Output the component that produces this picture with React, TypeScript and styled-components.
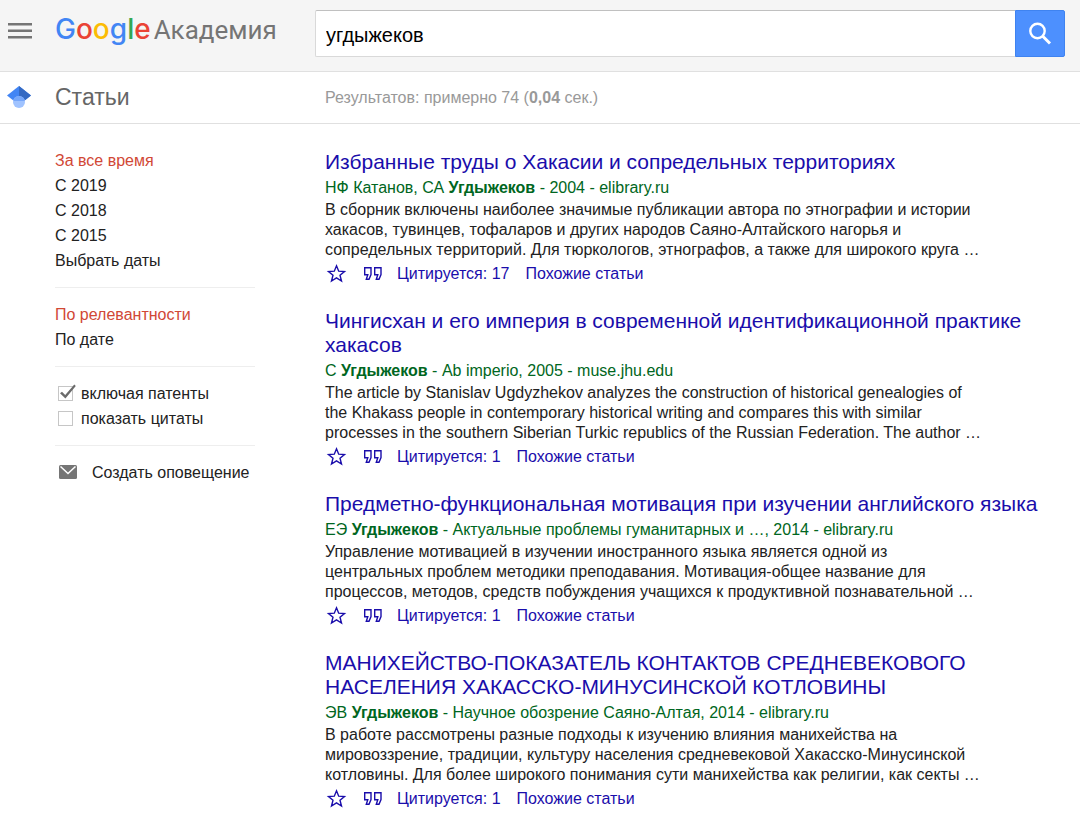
import React from 'react';
import styled, { createGlobalStyle } from 'styled-components';

const GlobalStyle = createGlobalStyle`
  *, *::before, *::after { box-sizing: border-box; }
  body {
    margin: 0;
    background: #fff;
    color: #222;
    font: 16px/20px "Liberation Sans", Arial, sans-serif;
  }
  a { color: inherit; text-decoration: none; }
  button { border: 0; padding: 0; background: none; font: inherit; color: inherit; cursor: pointer; }
  svg { flex-shrink: 0; }
`;

const Header = styled.header`
  display: flex;
  align-items: flex-start;
  height: 72px;
  padding: 10px 15px 0 0;
  background: #f5f5f5;
  border-bottom: 1px solid #e0e0e0;
`;

const Gutter = styled.div`
  flex: 0 0 55px;
  padding: 0 0 2px 7px;
  display: flex;
  align-items: center;
`;

const MenuButton = styled.button`
  flex: 0 0 55px;
  height: 42px;
  padding-left: 8px;
  display: flex;
  align-items: center;
`;

const Brand = styled.a`
  flex: 0 0 260px;
  display: flex;
  align-items: baseline;
  gap: 3px;
  line-height: 38px;
  white-space: nowrap;
`;

const Wordmark = styled.span`
  font-family: Inter, sans-serif;
  font-size: 28px;
  font-weight: 500;
`;

const Letter = styled.span<{ $color: string }>`
  color: ${(p) => p.$color};
`;

const Product = styled.span`
  font-family: Roboto, sans-serif;
  font-size: 26px;
  color: #757575;
`;

const SearchForm = styled.form`
  flex: 1;
  min-width: 0;
  display: flex;
  height: 47px;
`;

const SearchInput = styled.input`
  flex: 1;
  min-width: 0;
  padding: 4px 10px 0;
  border: 1px solid #d9d9d9;
  border-top-color: #c0c0c0;
  border-right: 0;
  border-radius: 2px 0 0 2px;
  background: #fff;
  color: #000;
  font: 20px "Liberation Sans", Arial, sans-serif;
  outline: none;
`;

const SearchButton = styled.button`
  flex: 0 0 50px;
  display: flex;
  align-items: center;
  justify-content: center;
  background: #4d90fe;
  border: 1px solid #3f83f0;
  border-radius: 0 2px 2px 0;
`;

const SubHeader = styled.div`
  display: flex;
  align-items: center;
  height: 52px;
  border-bottom: 1px solid #e0e0e0;
`;

const SectionTitle = styled.h1`
  flex: 0 0 270px;
  margin: 0;
  padding-bottom: 2px;
  font-size: 23px;
  font-weight: 400;
  line-height: 28px;
  color: #666;
`;

const Stats = styled.div`
  color: #999;
`;

const Content = styled.div`
  display: flex;
  align-items: flex-start;
  padding: 24px 20px 16px 55px;
`;

const Sidebar = styled.nav`
  flex: 0 0 200px;
  margin-right: 70px;
`;

const Group = styled.ul`
  list-style: none;
  margin: 0;
  padding: 0 0 14px;

  & + & {
    padding-top: 14px;
    border-top: 1px solid #eee;
  }
`;

const FilterItem = styled.li<{ $active?: boolean }>`
  display: flex;
  align-items: center;
  height: 25px;
  white-space: nowrap;
  color: ${(p) => (p.$active ? '#d14836' : '#222')};
`;

const CheckLabel = styled.label`
  display: flex;
  align-items: center;
  gap: 7px;
  padding-left: 3px;
`;

const CheckWrap = styled.span`
  position: relative;
  display: flex;
  width: 16px;

  svg {
    position: absolute;
    left: 0;
    bottom: 0;
    pointer-events: none;
  }
`;

const CheckBox = styled.input`
  appearance: none;
  width: 15px;
  height: 15px;
  margin: 0;
  border: 1px solid #c6c6c6;
  background: #fff;
`;

const AlertLink = styled.a`
  display: flex;
  align-items: center;
  gap: 14px;
  padding-left: 3px;
`;

const Results = styled.main`
  flex: 1;
  min-width: 0;
  padding-top: 2px;
`;

const Result = styled.article`
  margin-bottom: 23px;
`;

const Title = styled.h3`
  margin: 0 0 3px;
  font-size: 21px;
  font-weight: 400;
  line-height: 24px;
  color: #1a0dab;
`;

const Meta = styled.div`
  margin-bottom: 1px;
  line-height: 22px;
  color: #006621;
`;

const Snippet = styled.p`
  margin: 0 0 2px;
  line-height: 20px;
`;

const Actions = styled.div`
  display: flex;
  align-items: center;
  gap: 16px;
  height: 24px;
  color: #1a0dab;
`;

const IconButton = styled.button`
  display: flex;
  width: 20px;
`;

const StarIcon = () => (
  <svg width="22" height="22" viewBox="0 0 22 22" fill="none" stroke="currentColor" strokeWidth="1.400">
    <path d="M11.500 2.800l2.200 5.400 5.800.4-4.500 3.700 1.500 5.700-5-3.100-5 3.100 1.500-5.700-4.500-3.700 5.800-.4z" />
  </svg>
);

const QuoteIcon = () => (
  <svg width="22" height="22" viewBox="0 0 22 22" fill="none" stroke="currentColor" strokeWidth="1.400">
    <path d="M3.700 4.700h6.300v6.800l-2 4.800H5.300l1.500-4.500H3.700zM13.700 4.700H20v6.800l-2 4.800h-2.700l1.500-4.500h-3.100z" />
  </svg>
);

const MenuIcon = () => (
  <svg width="24" height="16" viewBox="0 0 24 16" fill="#757575">
    <path d="M0 0h24v2.500H0zM0 6.500h24V9H0zM0 13h24v2.500H0z" />
  </svg>
);

const SearchIcon = () => (
  <svg width="24" height="24" viewBox="0 0 24 24" fill="none" stroke="#fff" strokeWidth="2.400">
    <circle cx="9.500" cy="9" r="7.200" />
    <path d="M14.500 14L22 21.500" strokeWidth="3" />
  </svg>
);

const CapIcon = () => (
  <svg width="24" height="24" viewBox="0 0 24 24">
    <path d="M12 1L0 10.500 7 16h10l7-5.500z" fill="#4285f4" />
    <path d="M12 1v10l5 5 7-5.500z" fill="#356ac3" />
    <circle cx="12" cy="17" r="6" fill="#a0c3ff" />
    <path d="M6.500 14.500a6 6 0 0 1 11 0L17 16H7z" fill="#76a7fa" />
  </svg>
);

const TickIcon = () => (
  <svg width="19" height="17" viewBox="0 0 19 17" fill="#6b6b6b">
    <path d="M2 9.200l2-1.500 3.200 3.300L16.300.6l1.500 1.300L7.400 14.600z" />
  </svg>
);

const MailIcon = () => (
  <svg width="20" height="18" viewBox="0 0 20 18">
    <rect x="1" y="1" width="18" height="14" rx="1.500" fill="#757575" />
    <path d="M2.500 2.500l7.500 7 7.500-7" fill="none" stroke="#fff" strokeWidth="1.500" />
  </svg>
);

type Item = { title: string; before: string; after: string; lines: string[]; cited: number };

const items: Item[] = [
  {
    title: 'Избранные труды о Хакасии и сопредельных территориях',
    before: 'НФ Катанов, СА ',
    after: ' - 2004 - elibrary.ru',
    lines: [
      'В сборник включены наиболее значимые публикации автора по этнографии и истории',
      'хакасов, тувинцев, тофаларов и других народов Саяно-Алтайского нагорья и',
      'сопредельных территорий. Для тюркологов, этнографов, а также для широкого круга …',
    ],
    cited: 17,
  },
  {
    title: 'Чингисхан и его империя в современной идентификационной практике хакасов',
    before: 'С ',
    after: ' - Ab imperio, 2005 - muse.jhu.edu',
    lines: [
      'The article by Stanislav Ugdyzhekov analyzes the construction of historical genealogies of',
      'the Khakass people in contemporary historical writing and compares this with similar',
      'processes in the southern Siberian Turkic republics of the Russian Federation. The author …',
    ],
    cited: 1,
  },
  {
    title: 'Предметно-функциональная мотивация при изучении английского языка',
    before: 'ЕЭ ',
    after: ' - Актуальные проблемы гуманитарных и …, 2014 - elibrary.ru',
    lines: [
      'Управление мотивацией в изучении иностранного языка является одной из',
      'центральных проблем методики преподавания. Мотивация-общее название для',
      'процессов, методов, средств побуждения учащихся к продуктивной познавательной …',
    ],
    cited: 1,
  },
  {
    title: 'МАНИХЕЙСТВО-ПОКАЗАТЕЛЬ КОНТАКТОВ СРЕДНЕВЕКОВОГО НАСЕЛЕНИЯ ХАКАССКО-МИНУСИНСКОЙ КОТЛОВИНЫ',
    before: 'ЭВ ',
    after: ' - Научное обозрение Саяно-Алтая, 2014 - elibrary.ru',
    lines: [
      'В работе рассмотрены разные подходы к изучению влияния манихейства на',
      'мировоззрение, традиции, культуру населения средневековой Хакасско-Минусинской',
      'котловины. Для более широкого понимания сути манихейства как религии, как секты …',
    ],
    cited: 1,
  },
];

const logo: [string, string][] = [
  ['G', '#4285f4'],
  ['o', '#ea4335'],
  ['o', '#fbbc05'],
  ['g', '#4285f4'],
  ['l', '#34a853'],
  ['e', '#ea4335'],
];

export default function App() {
  return (
    <>
      <GlobalStyle />
      <Header>
        <MenuButton type="button" aria-label="Меню">
          <MenuIcon />
        </MenuButton>
        <Brand href="#">
          <Wordmark>
            {logo.map(([char, color], i) => (
              <Letter key={i} $color={color}>{char}</Letter>
            ))}
          </Wordmark>
          <Product>Академия</Product>
        </Brand>
        <SearchForm onSubmit={(e) => e.preventDefault()}>
          <SearchInput type="text" aria-label="Поиск" defaultValue="угдыжеков" />
          <SearchButton type="submit" aria-label="Найти">
            <SearchIcon />
          </SearchButton>
        </SearchForm>
      </Header>
      <SubHeader>
        <Gutter>
          <CapIcon />
        </Gutter>
        <SectionTitle>Статьи</SectionTitle>
        <Stats>
          Результатов: примерно 74 (<b>0,04</b> сек.)
        </Stats>
      </SubHeader>
      <Content>
        <Sidebar>
          <Group>
            <FilterItem $active><a href="#">За все время</a></FilterItem>
            <FilterItem><a href="#">С 2019</a></FilterItem>
            <FilterItem><a href="#">С 2018</a></FilterItem>
            <FilterItem><a href="#">С 2015</a></FilterItem>
            <FilterItem><a href="#">Выбрать даты</a></FilterItem>
          </Group>
          <Group>
            <FilterItem $active><a href="#">По релевантности</a></FilterItem>
            <FilterItem><a href="#">По дате</a></FilterItem>
          </Group>
          <Group>
            <FilterItem>
              <CheckLabel>
                <CheckWrap>
                  <CheckBox type="checkbox" defaultChecked />
                  <TickIcon />
                </CheckWrap>
                включая патенты
              </CheckLabel>
            </FilterItem>
            <FilterItem>
              <CheckLabel>
                <CheckWrap>
                  <CheckBox type="checkbox" />
                </CheckWrap>
                показать цитаты
              </CheckLabel>
            </FilterItem>
          </Group>
          <Group>
            <FilterItem>
              <AlertLink href="#">
                <MailIcon />
                Создать оповещение
              </AlertLink>
            </FilterItem>
          </Group>
        </Sidebar>
        <Results>
          {items.map((item) => (
            <Result key={item.title}>
              <Title><a href="#">{item.title}</a></Title>
              <Meta>{item.before}<b>Угдыжеков</b>{item.after}</Meta>
              <Snippet>
                {item.lines.map((line, i) => (
                  <React.Fragment key={i}>
                    {i > 0 && <br />}
                    {line}
                  </React.Fragment>
                ))}
              </Snippet>
              <Actions>
                <IconButton type="button" aria-label="Сохранить"><StarIcon /></IconButton>
                <IconButton type="button" aria-label="Цитировать"><QuoteIcon /></IconButton>
                <a href="#">Цитируется: {item.cited}</a>
                <a href="#">Похожие статьи</a>
              </Actions>
            </Result>
          ))}
        </Results>
      </Content>
    </>
  );
}
